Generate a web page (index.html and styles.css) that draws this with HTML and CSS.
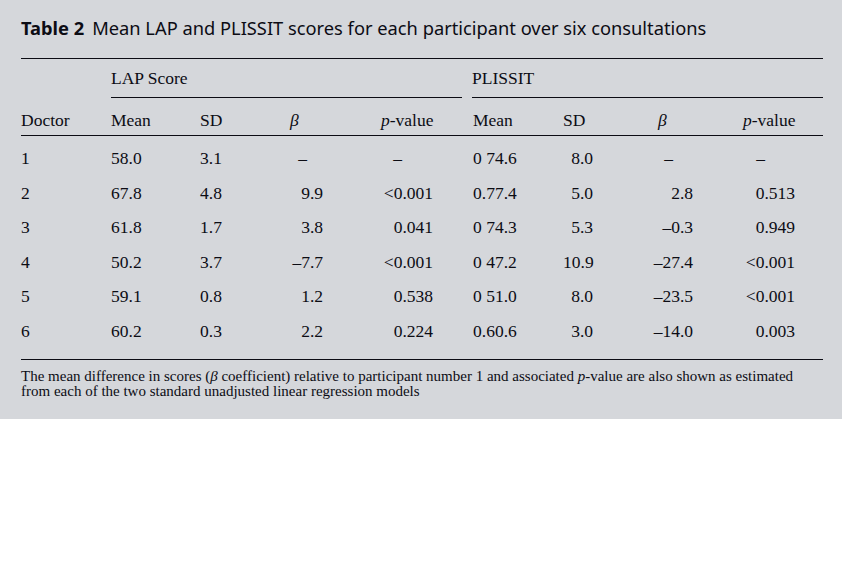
FILE: index.html
```html
<!DOCTYPE html>
<html lang="en">
<head>
<meta charset="utf-8">
<title>Table 2</title>
<link rel="stylesheet" href="styles.css">
</head>
<body>
<div class="page">
  <h1 class="title"><b class="label">Table 2</b>Mean LAP and PLISSIT scores for each participant over six consultations</h1>
  <table class="tbl">
    <colgroup>
      <col class="w-doc"><col class="w-mean"><col class="w-sd"><col class="w-beta"><col class="w-p">
      <col class="w-mean2"><col class="w-sd2"><col class="w-beta2"><col class="w-p2">
    </colgroup>
    <thead>
      <tr class="group">
        <th></th>
        <th colspan="4"><div class="grp grp-lap">LAP Score</div></th>
        <th colspan="4"><div class="grp grp-pl">PLISSIT</div></th>
      </tr>
      <tr class="heads">
        <th>Doctor</th>
        <th>Mean</th>
        <th>SD</th>
        <th class="h-beta"><i>β</i></th>
        <th class="h-p"><i>p</i>-value</th>
        <th>Mean</th>
        <th>SD</th>
        <th class="h-beta2"><i>β</i></th>
        <th class="h-p2"><i>p</i>-value</th>
      </tr>
    </thead>
    <tbody>
      <tr>
        <td>1</td><td>58.0</td><td>3.1</td><td class="d-beta dash-beta">–</td><td class="d-p dash-p">–</td>
        <td>0 74.6</td><td class="d-sd2">8.0</td><td class="d-beta2 dash-beta2">–</td><td class="d-p2 dash-p2">–</td>
      </tr>
      <tr>
        <td>2</td><td>67.8</td><td>4.8</td><td class="d-beta">9.9</td><td class="d-p">&lt;0.001</td>
        <td>0.77.4</td><td class="d-sd2">5.0</td><td class="d-beta2">2.8</td><td class="d-p2">0.513</td>
      </tr>
      <tr>
        <td>3</td><td>61.8</td><td>1.7</td><td class="d-beta">3.8</td><td class="d-p">0.041</td>
        <td>0 74.3</td><td class="d-sd2">5.3</td><td class="d-beta2">–0.3</td><td class="d-p2">0.949</td>
      </tr>
      <tr>
        <td>4</td><td>50.2</td><td>3.7</td><td class="d-beta">–7.7</td><td class="d-p">&lt;0.001</td>
        <td>0 47.2</td><td class="d-sd2">10.9</td><td class="d-beta2">–27.4</td><td class="d-p2">&lt;0.001</td>
      </tr>
      <tr>
        <td>5</td><td>59.1</td><td>0.8</td><td class="d-beta">1.2</td><td class="d-p">0.538</td>
        <td>0 51.0</td><td class="d-sd2">8.0</td><td class="d-beta2">–23.5</td><td class="d-p2">&lt;0.001</td>
      </tr>
      <tr>
        <td>6</td><td>60.2</td><td>0.3</td><td class="d-beta">2.2</td><td class="d-p">0.224</td>
        <td>0.60.6</td><td class="d-sd2">3.0</td><td class="d-beta2">–14.0</td><td class="d-p2">0.003</td>
      </tr>
    </tbody>
  </table>
  <p class="note">The mean difference in scores (<i>β</i> coefficient) relative to participant number 1 and associated <i>p</i>-value are also shown as estimated<br>from each of the two standard unadjusted linear regression models</p>
</div>
</body>
</html>
```
FILE: styles.css
```css
html, body {
  margin: 0;
  padding: 0;
  background: #ffffff;
}

.page {
  width: 842px;
  height: 419px;
  box-sizing: border-box;
  padding: 17px 19px 0 21px;
  background: #d5d7db;
  color: #0c0c14;
  font-family: "Liberation Serif", "Times New Roman", serif;
}

.title {
  margin: 0;
  font-family: "Noto Sans", "Open Sans", sans-serif;
  font-size: 18.3px;
  line-height: 22px;
  font-weight: normal;
  white-space: nowrap;
}

.title .label {
  font-weight: bold;
  margin-right: 8px;
}

.tbl {
  margin-top: 19px;
  width: 802px;
  table-layout: fixed;
  border-collapse: collapse;
  border-spacing: 0;
  border-top: 1px solid #0c0c14;
  border-bottom: 1px solid #0c0c14;
  font-size: 17.5px;
}

.w-doc { width: 90px; }
.w-mean { width: 89px; }
.w-sd { width: 62px; }
.w-beta { width: 61px; }
.w-p { width: 150px; }
.w-mean2 { width: 90px; }
.w-sd2 { width: 57px; }
.w-beta2 { width: 73px; }
.w-p2 { width: 130px; }

.tbl th,
.tbl td {
  padding: 0;
  text-align: left;
  font-weight: normal;
  white-space: nowrap;
}

.group th {
  line-height: 20px;
}

.grp {
  padding: 9px 0;
  border-bottom: 1px solid #0c0c14;
}

.grp-lap { margin-right: 11px; }
.grp-pl { margin-left: -1px; }

.heads th {
  line-height: 20px;
  padding-top: 12px;
  padding-bottom: 5px;
  border-bottom: 1px solid #0c0c14;
}

.heads .h-beta { padding-left: 28px; }
.heads .h-p { padding-left: 58px; }
.heads .h-beta2 { padding-left: 38px; }
.heads .h-p2 { padding-left: 50px; }

.tbl tbody td {
  line-height: 34.6px;
}

.tbl tbody tr:first-child td { padding-top: 5px; }
.tbl tbody tr:last-child td { padding-bottom: 10px; }

.tbl td.d-beta { text-align: right; }
.tbl td.d-p { text-align: right; padding-right: 40px; }
.tbl td.d-sd2 { text-align: right; padding-right: 27px; }
.tbl td.d-beta2 { text-align: right; }
.tbl td.d-p2 { text-align: right; padding-right: 28px; }

.tbl td.dash-beta { padding-right: 16px; }
.tbl td.dash-p { padding-right: 71px; }
.tbl td.dash-beta2 { padding-right: 20px; }
.tbl td.dash-p2 { padding-right: 58px; }

.note {
  margin: 9px 0 0;
  font-size: 15px;
  line-height: 15px;
  white-space: nowrap;
}
```
